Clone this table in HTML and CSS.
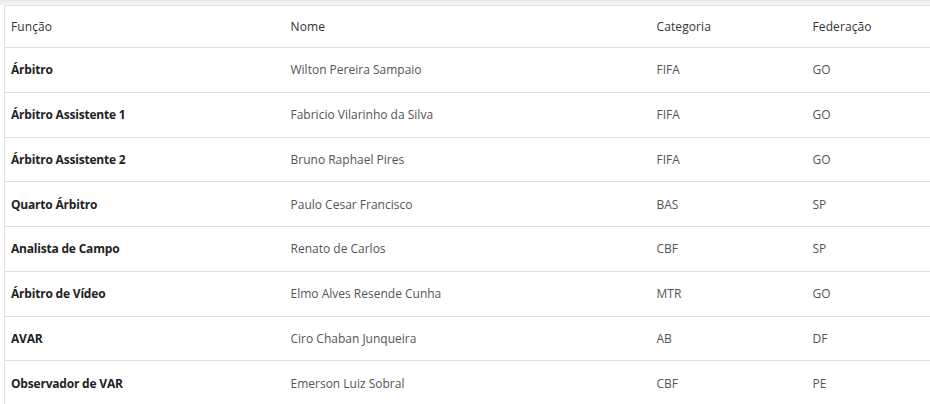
FILE: index.html
```html
<!DOCTYPE html>
<html lang="pt-BR">
<head>
<meta charset="utf-8">
<title>Arbitragem</title>
<link rel="stylesheet" href="styles.css">
</head>
<body>
<div class="shade"></div>
<div class="wrap">
<table class="tbl">
<colgroup><col class="c1"><col class="c2"><col class="c3"><col class="c4"></colgroup>
<thead>
<tr><th>Função</th><th>Nome</th><th>Categoria</th><th>Federação</th></tr>
</thead>
<tbody>
<tr><td class="fn">Árbitro</td><td>Wilton Pereira Sampaio</td><td>FIFA</td><td>GO</td></tr>
<tr><td class="fn">Árbitro Assistente 1</td><td>Fabricio Vilarinho da Silva</td><td>FIFA</td><td>GO</td></tr>
<tr><td class="fn">Árbitro Assistente 2</td><td>Bruno Raphael Pires</td><td>FIFA</td><td>GO</td></tr>
<tr><td class="fn">Quarto Árbitro</td><td>Paulo Cesar Francisco</td><td>BAS</td><td>SP</td></tr>
<tr><td class="fn">Analista de Campo</td><td>Renato de Carlos</td><td>CBF</td><td>SP</td></tr>
<tr><td class="fn">Árbitro de Vídeo</td><td>Elmo Alves Resende Cunha</td><td>MTR</td><td>GO</td></tr>
<tr><td class="fn">AVAR</td><td>Ciro Chaban Junqueira</td><td>AB</td><td>DF</td></tr>
<tr><td class="fn">Observador de VAR</td><td>Emerson Luiz Sobral</td><td>CBF</td><td>PE</td></tr>
</tbody>
</table>
</div>
</body>
</html>
```
FILE: styles.css
```css
html, body {
  margin: 0;
  padding: 0;
  background: #fff;
  overflow: hidden;
}
body {
  font-family: "Open Sans", "Liberation Sans", sans-serif;
  font-size: 12px;
  color: #555;
}
.shade {
  height: 5px;
  background: linear-gradient(#e9e9e9, #f6f6f6);
}
.wrap {
  padding-left: 4px;
  width: 960px;
}
.tbl {
  border-collapse: collapse;
  table-layout: fixed;
  width: 956px;
  border-left: 1px solid #e2e2e2;
  border-top: 1px solid #e4e4e4;
}
.c1 { width: 280px; }
.c2 { width: 366px; }
.c3 { width: 156px; }
.c4 { width: 154px; }
.tbl th, .tbl td {
  text-align: left;
  padding: 0 6px;
  border-bottom: 1px solid #dedede;
  white-space: nowrap;
}
.tbl th {
  height: 41px;
  font-weight: 400;
  color: #333;
  letter-spacing: 0.1px;
}
.tbl td {
  height: 43.75px;
}
.tbl td.fn {
  font-weight: 700;
  color: #222;
  letter-spacing: -0.2px;
}
```
